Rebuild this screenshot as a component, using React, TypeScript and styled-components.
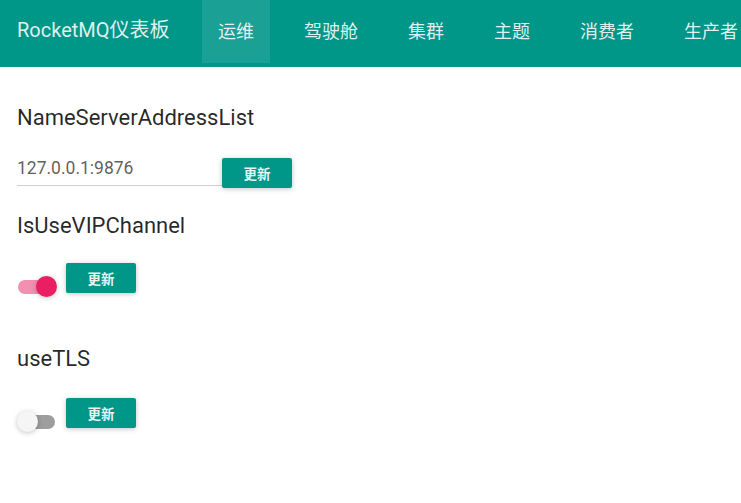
import styled, { createGlobalStyle } from "styled-components";

const GlobalStyle = createGlobalStyle`
  body {
    margin: 0;
    background: #ffffff;
    font-family: Roboto, "Noto Sans CJK SC", sans-serif;
  }
`;

const Page = styled.div`
  width: 741px;
  min-height: 503px;
  background: #ffffff;
`;

const Header = styled.header`
  display: flex;
  align-items: flex-start;
  height: 67px;
  background-color: #009688;
  overflow: hidden;
`;

const Brand = styled.div`
  flex: none;
  box-sizing: border-box;
  width: 202px;
  padding-left: 17px;
  height: 63px;
  line-height: 61px;
  font-size: 20px;
  color: rgba(255, 255, 255, 0.88);
  white-space: nowrap;
`;

const Tab = styled.div<{ active?: boolean }>`
  flex: none;
  height: 63px;
  line-height: 63px;
  padding: 0 16px;
  margin-right: 18px;
  font-size: 18px;
  color: rgba(255, 255, 255, 0.88);
  background-color: ${(props) =>
    props.active ? "rgba(255, 255, 255, 0.1)" : "transparent"};
  white-space: nowrap;
`;

const Content = styled.main`
  padding: 38px 17px 0;
`;

const Field = styled.section<{ top: number }>`
  margin-top: ${(props) => props.top}px;
`;

const Label = styled.div`
  font-size: 22px;
  line-height: 26px;
  color: rgba(0, 0, 0, 0.85);
`;

const Row = styled.div<{ top: number }>`
  display: flex;
  align-items: flex-start;
  margin-top: ${(props) => props.top}px;
`;

const TextInput = styled.div`
  width: 205px;
  height: 27px;
  border-bottom: 1px solid #d0d0d0;
  font-size: 17.5px;
  line-height: 20px;
  color: rgba(0, 0, 0, 0.65);
`;

const Button = styled.button`
  width: 70px;
  height: 30px;
  padding: 0;
  border: none;
  border-radius: 2px;
  background-color: #009688;
  color: rgba(255, 255, 255, 0.92);
  font-family: Roboto, "Noto Sans CJK SC", sans-serif;
  font-size: 13.5px;
  font-weight: 700;
  box-shadow: 0 1px 6px rgba(0, 0, 0, 0.12), 0 1px 4px rgba(0, 0, 0, 0.12);
`;

const Toggle = styled.div<{ on: boolean }>`
  position: relative;
  flex: none;
  width: 40px;
  height: 20px;
  margin-top: 13px;
  margin-right: 9px;
  &::before {
    content: "";
    position: absolute;
    left: 1px;
    top: 4px;
    width: 37px;
    height: 14px;
    border-radius: 7px;
    background-color: ${(props) => (props.on ? "#f48fb1" : "#9e9e9e")};
  }
  &::after {
    content: "";
    position: absolute;
    top: 0;
    left: ${(props) => (props.on ? "19px" : "0")};
    width: 21px;
    height: 21px;
    border-radius: 50%;
    background-color: ${(props) => (props.on ? "#e91e63" : "#f5f5f5")};
    box-shadow: 0 1px 6px rgba(0, 0, 0, 0.12), 0 1px 4px rgba(0, 0, 0, 0.12);
  }
`;

const tabs = ["运维", "驾驶舱", "集群", "主题", "消费者", "生产者"];

export default function App() {
  return (
    <Page>
      <GlobalStyle />
      <Header>
        <Brand>RocketMQ仪表板</Brand>
        {tabs.map((t, i) => (
          <Tab key={t} active={i === 0}>
            {t}
          </Tab>
        ))}
      </Header>
      <Content>
        <Field top={0}>
          <Label>NameServerAddressList</Label>
          <Row top={27}>
            <TextInput>127.0.0.1:9876</TextInput>
            <Button>更新</Button>
          </Row>
        </Field>
        <Field top={25}>
          <Label>IsUseVIPChannel</Label>
          <Row top={24}>
            <Toggle on={true} />
            <Button>更新</Button>
          </Row>
        </Field>
        <Field top={50}>
          <Label>useTLS</Label>
          <Row top={26}>
            <Toggle on={false} />
            <Button>更新</Button>
          </Row>
        </Field>
      </Content>
    </Page>
  );
}
